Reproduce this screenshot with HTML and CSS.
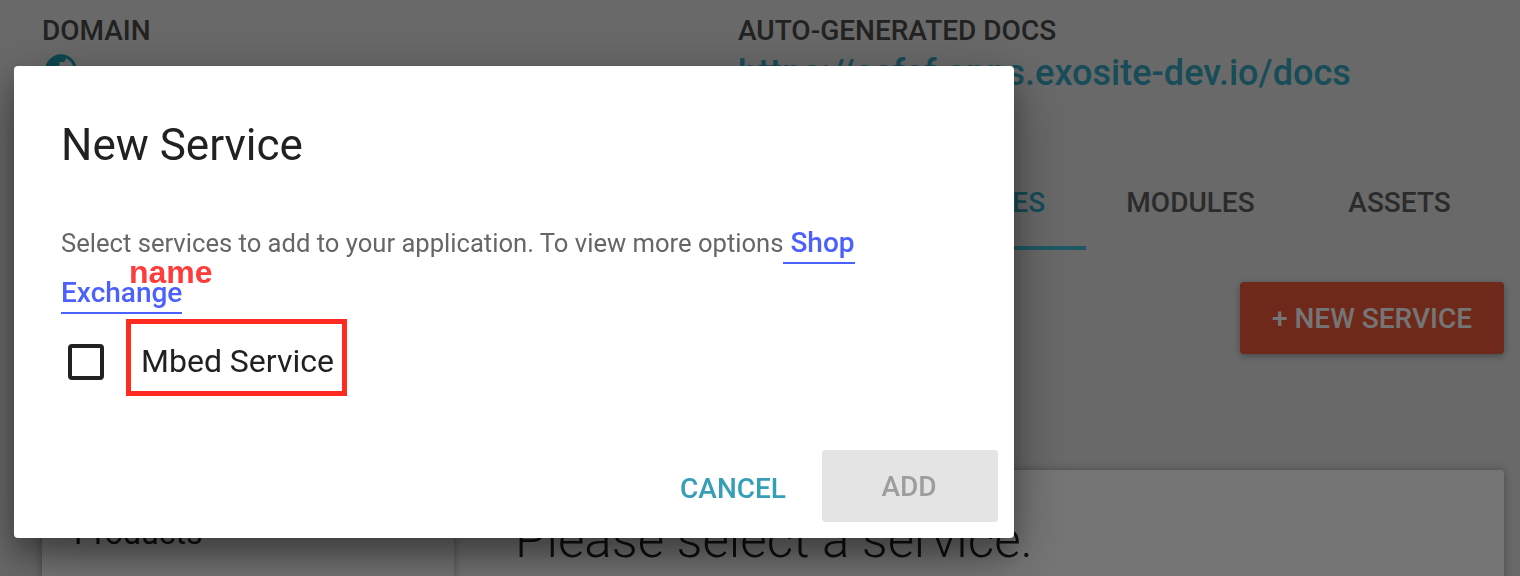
FILE: index.html
```html
<!DOCTYPE html>
<html lang="en">
<head>
<meta charset="utf-8">
<title>New Service</title>
<link rel="stylesheet" href="styles.css">
</head>
<body>
<main class="page">
  <header class="info">
    <div class="info-item">
      <div class="info-label">DOMAIN</div>
      <svg class="globe" viewBox="0 0 24 24"><path d="M12 2C6.480 2 2 6.480 2 12s4.480 10 10 10 10-4.480 10-10S17.520 2 12 2zm-1 17.930c-3.950-.49-7-3.850-7-7.930 0-.62.080-1.210.21-1.790L9 15v1c0 1.100.9 2 2 2v1.930zm6.900-2.540c-.26-.81-1-1.390-1.900-1.390h-1v-3c0-.55-.45-1-1-1H8v-2h2c.55 0 1-.45 1-1V7h2c1.100 0 2-.9 2-2v-.41c2.930 1.190 5 4.060 5 7.410 0 2.080-.8 3.970-2.100 5.390z"/></svg>
    </div>
    <div class="info-item">
      <div class="info-label">AUTO-GENERATED DOCS</div>
      <a class="docs-link">https://asfsf.apps.exosite-dev.io/docs</a>
    </div>
  </header>
  <nav class="tabs">
    <a class="tab tab-active">SERVICES</a>
    <a class="tab">MODULES</a>
    <a class="tab">ASSETS</a>
  </nav>
  <div class="toolbar"><button class="btn-new">+ NEW SERVICE</button></div>
  <div class="panels">
    <aside class="card sidebar">Products</aside>
    <section class="card content">Please select a service.</section>
  </div>
</main>
<div class="backdrop">
  <section class="dialog">
    <h1 class="dialog-title">New Service</h1>
    <p class="dialog-text">Select services to add to your application. To view more options<a class="shop-link"> Shop Exchange</a></p>
    <div class="option">
      <span class="checkbox"></span>
      <span class="option-label">Mbed Service<span class="note">name</span></span>
    </div>
    <footer class="actions">
      <button class="btn-cancel">CANCEL</button>
      <button class="btn-add">ADD</button>
    </footer>
  </section>
</div>
</body>
</html>
```
FILE: styles.css
```css
* { box-sizing: border-box; }
body {
  margin: 0;
  height: 576px;
  overflow: hidden;
  background: #e4e4e4;
  font-family: Roboto, "Liberation Sans", sans-serif;
}
button { border: 0; padding: 0; font: inherit; }

.page { height: 576px; padding: 14px 16px 0 42px; overflow: hidden; }
.info { display: grid; grid-template-columns: 696px 1fr; height: 148px; }
.info-label { font-size: 28px; font-weight: 500; line-height: 33px; color: #4a4a4a; }
.globe { display: block; width: 38px; height: 38px; margin-top: 4px; fill: #1f9aae; }
.docs-link { display: block; font-size: 36px; font-weight: 500; line-height: 52px; letter-spacing: .03px; color: #32a6bf; white-space: nowrap; }

.tabs { display: flex; justify-content: flex-end; height: 88px; }
.tab { min-width: 209px; padding: 24px 40px 0; font-size: 28px; font-weight: 500; line-height: 33px; text-align: center; color: #5f5f5f; }
.tab-active { color: #32a6bf; border-bottom: 4px solid #45c0d9; }

.toolbar { display: flex; justify-content: flex-end; height: 220px; padding-top: 32px; }
.btn-new {
  width: 264px; height: 72px; border-radius: 4px;
  background: #ef5b39; color: #fff; font-size: 28px; font-weight: 500;
  box-shadow: 0 2px 6px rgba(0, 0, 0, .3);
}

.panels { display: flex; height: 200px; }
.card { background: #fff; border-radius: 4px; box-shadow: 0 0 8px rgba(0, 0, 0, .3); color: #212121; }
.sidebar { position: relative; z-index: 1; width: 412px; padding: 44px 32px; font-size: 32px; line-height: 38px; }
.content { flex: 1; padding: 40px 61px; font-size: 51.1px; font-weight: 300; line-height: 60px; }

.backdrop { position: fixed; inset: 0; z-index: 2; padding: 66px 0 0 14px; background: rgba(0, 0, 0, .54); }
.dialog {
  display: flex; flex-direction: column;
  width: 1000px; height: 472px; padding: 48px 16px 16px 47px;
  background: #fff; border-radius: 4px;
  box-shadow: 0 19px 60px rgba(0, 0, 0, .35), 0 15px 24px rgba(0, 0, 0, .25);
}
.dialog-title { margin: 0; font-size: 44px; font-weight: 400; line-height: 62px; color: #212121; }
.dialog-text { width: 830px; margin: 42px 0 0; font-size: 25.6px; line-height: 50px; color: #666; }
.shop-link { padding-bottom: 3px; border-bottom: 2px solid #4b60ff; color: #4b60ff; font-size: 28px; font-weight: 500; }
.option { display: flex; align-items: center; gap: 22px; height: 77px; margin-top: 1px; padding-left: 7px; }
.checkbox { width: 36px; height: 36px; margin-top: 9px; border: 4px solid #212121; border-radius: 4px; }
.option-label {
  position: relative; width: 221px; height: 77px; padding: 0 10px;
  border: 5px solid #ff2a20; font-size: 32px; line-height: 75px; color: #212121; white-space: nowrap;
}
.note { position: absolute; left: -2px; top: -70px; font: bold 32px/37px "Liberation Sans", sans-serif; color: #ff3b3b; }
.actions { display: flex; align-items: center; justify-content: flex-end; gap: 36px; margin-top: auto; height: 72px; font-size: 28px; font-weight: 500; }
.btn-cancel { background: none; color: #349fb7; padding-top: 4px; }
.btn-add { width: 176px; height: 72px; padding-right: 2px; border-radius: 4px; background: #e4e4e4; color: #9d9d9d; }
```
